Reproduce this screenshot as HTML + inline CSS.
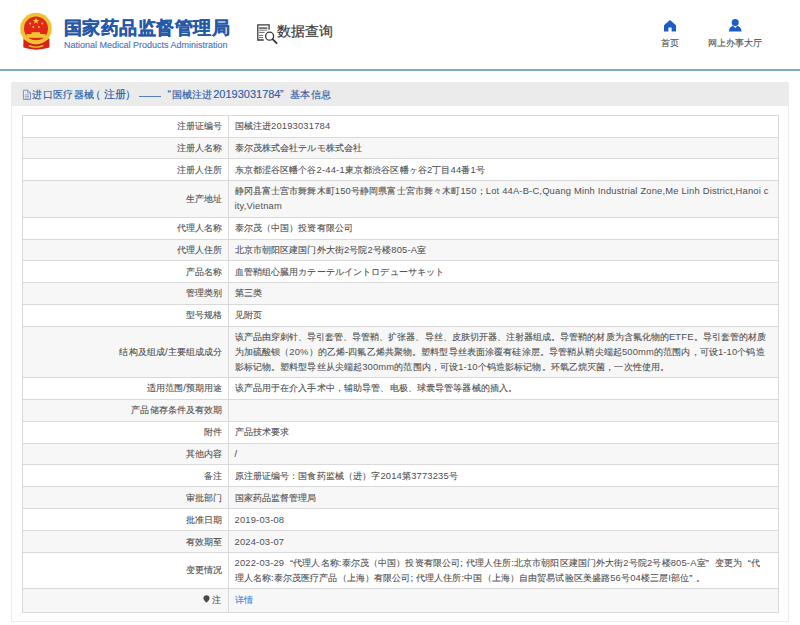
<!DOCTYPE html>
<html><head><meta charset="utf-8">
<style>
*{margin:0;padding:0;box-sizing:border-box}
html,body{width:800px;height:625px;overflow:hidden;background:#fff}
body{font-family:"Liberation Sans",sans-serif;position:relative;color:#333}
.abs{position:absolute}
#title{left:64px;top:15.7px;-webkit-text-stroke:0.3px #2658a8;font-size:18px;font-weight:bold;color:#2658a8;white-space:nowrap;letter-spacing:0.45px;line-height:24px}
#en{left:64px;top:40.3px;font-size:9px;color:#4f78b8;-webkit-text-stroke:0.15px #4f78b8;white-space:nowrap;line-height:11px}
#sq{left:277px;top:22.3px;font-size:14px;color:#3a3a3a;-webkit-text-stroke:0.2px #3a3a3a;white-space:nowrap;line-height:18px}
.nav{font-size:9px;color:#555;-webkit-text-stroke:0.12px #555;white-space:nowrap;line-height:12px}
#bline{left:0;top:69px;width:800px;height:2px;background:#7eaac4}
#panel{left:11px;top:82px;width:778px;height:539.5px;border:1px solid #ececec;border-top:none}
#band{left:11px;top:82px;width:778px;height:24.3px;background:#ebebeb}
.ht{top:87px;font-size:10.5px;color:#2d5ea8;-webkit-text-stroke:0.15px #2d5ea8;white-space:nowrap;line-height:15px}
table{position:absolute;left:22px;top:115px;width:756.5px;border-collapse:collapse;table-layout:fixed;font-size:9.4px;color:#505050;-webkit-text-stroke:0.1px #505050}
td{border:1px solid #d9d9d9;padding:0 6px 1px 6px;letter-spacing:0.12px;line-height:15px;vertical-align:middle}
td.l{width:206px;text-align:right;padding-right:5.5px}
td.r{padding-left:5.5px;white-space:nowrap;overflow:visible}
tr:nth-child(even) td{background:#f7f7f7}
a{color:#3a86d6;text-decoration:none;-webkit-text-stroke:0.1px #3a86d6}
.lt{font-size:9.4px;letter-spacing:0.18px;-webkit-text-stroke:0.02px}
.ql{margin-left:3px}
.qr{margin-right:3px}
</style></head><body>
<!-- emblem -->
<svg class="abs" style="left:10px;top:5px" width="60" height="55" viewBox="0 0 60 55">
  <path d="M13.4 33.5 L13.4 42.6 Q26 46.8 39.4 42.6 L39.4 33.5Z" fill="#d6231a"/>
  <circle cx="26" cy="23.6" r="15.8" fill="#f2c233"/>
  <circle cx="26" cy="23.6" r="12" fill="#e2261c"/>
  <path d="M26 12.7l.8 2.3h2.4l-1.95 1.42.75 2.3-2-1.42-2 1.42.75-2.3-1.95-1.42h2.4z" fill="#f7d445"/>
  <circle cx="20.2" cy="18.5" r="1.05" fill="#f2c233"/><circle cx="32.2" cy="18.5" r="1.05" fill="#f2c233"/>
  <circle cx="23.3" cy="22" r="1" fill="#f2c233"/><circle cx="28.8" cy="22" r="1" fill="#f2c233"/>
  <rect x="21.6" y="27.2" width="8.6" height="2" fill="#f2c233"/>
  <rect x="16.5" y="29" width="19" height="3.8" fill="#f2c233"/>
  <path d="M14.2 31 Q26 39.5 37.8 31 L38.6 34 Q26 43 13.4 34Z" fill="#f2c233"/>
  <path d="M15.6 35.8 Q26 43.5 36.4 35.8 L38.8 40.6 Q26 47.2 13.2 40.6Z" fill="#d6231a"/>
  <path d="M18.8 40.6 Q26 43.6 33.4 40.6" stroke="#f2c233" stroke-width="1.2" fill="none"/>
</svg>
<div id="title" class="abs">国家药品监督管理局</div>
<div id="en" class="abs">National Medical Products Administration</div>
<!-- data query icon -->
<svg class="abs" style="left:254px;top:20px" width="28" height="26" viewBox="0 0 28 26">
  <path d="M9.8 20 H3.8 V4.9 H15.1 V9.8" fill="none" stroke="#3c3c3c" stroke-width="1.3"/>
  <line x1="5.1" y1="8.1" x2="13.4" y2="8.1" stroke="#555" stroke-width="1.5"/>
  <line x1="5.1" y1="10.2" x2="13.4" y2="10.2" stroke="#555" stroke-width=".8"/>
  <line x1="5.1" y1="12.4" x2="10.5" y2="12.4" stroke="#555" stroke-width=".9"/>
  <line x1="5.1" y1="15.4" x2="9.2" y2="15.4" stroke="#555" stroke-width=".9"/>
  <line x1="5.1" y1="17.6" x2="9.2" y2="17.6" stroke="#555" stroke-width=".9"/>
  <circle cx="15.6" cy="16.2" r="4" fill="#fff" stroke="#333" stroke-width="1.3"/>
  <line x1="18.5" y1="19.2" x2="22.6" y2="23.1" stroke="#333" stroke-width="1.8" stroke-linecap="round"/>
</svg>
<div id="sq" class="abs">数据查询</div>
<!-- nav -->
<svg class="abs" style="left:664px;top:20px" width="12" height="12" viewBox="0 0 12 12">
  <path d="M6 0 L12 5.2 L12 11.6 L7.6 11.6 L7.6 7.4 L4.4 7.4 L4.4 11.6 L0 11.6 L0 5.2Z" fill="#1c5cc8"/>
</svg>
<div class="abs nav" style="left:661px;top:37px">首页</div>
<svg class="abs" style="left:728px;top:18px" width="14" height="14" viewBox="0 0 14 14">
  <circle cx="7.2" cy="4.6" r="3.5" fill="#1c5cc8"/>
  <path d="M0.8 13.4 Q1.5 8.6 5 7.8 L7.2 10 L9.4 7.8 Q12.9 8.6 13.6 13.4Z" fill="#1c5cc8"/>
</svg>
<div class="abs nav" style="left:708px;top:37px">网上办事大厅</div>
<div id="bline" class="abs"></div>
<div id="panel" class="abs"></div>
<div id="band" class="abs"></div>
<svg class="abs" style="left:22px;top:89px" width="10" height="12" viewBox="0 0 10 12"><path d="M1.4 1.2h4.4l2.7 2.7v6.5H1.4Z" fill="none" stroke="#6f7db3" stroke-width=".85"/><path d="M5.6 1.2v2.8h2.9" fill="none" stroke="#6f7db3" stroke-width=".7"/><line x1="2.9" y1="5.8" x2="7" y2="5.8" stroke="#7f8cc0" stroke-width=".7"/><line x1="2.9" y1="7.4" x2="7" y2="7.4" stroke="#7f8cc0" stroke-width=".7"/><line x1="2.9" y1="9" x2="7" y2="9" stroke="#7f8cc0" stroke-width=".7"/></svg>
<div class="abs ht" id="h1" style="left:32.2px;font-size:10.4px;letter-spacing:0.35px">进口医疗器械</div>
<div class="abs ht" id="h1b" style="left:90.2px">（</div>
<div class="abs ht" id="h1c" style="left:103.5px;font-size:10.7px">注册</div>
<div class="abs ht" id="h1d" style="left:124.5px">）</div>
<div class="abs" style="left:138.75px;top:95.5px;width:22.5px;height:1.2px;background:#5a80bb"></div>
<div class="abs ht" id="h2" style="left:167.5px">“</div>
<div class="abs ht" id="h3" style="left:171.5px;font-size:10.4px;letter-spacing:0.3px">国械注进</div><div class="abs ht" id="h3b" style="left:213.2px;font-size:11px">20193031784</div>
<div class="abs ht" id="h4" style="left:280px">”</div>
<div class="abs ht" id="h5" style="left:290px;font-size:10.4px;letter-spacing:0.45px">基本信息</div>
<table>
<tr style="height:21.7px"><td class="l">注册证编号</td><td class="r">国械注进<span class="lt">20193031784</span></td></tr>
<tr style="height:21.8px"><td class="l">注册人名称</td><td class="r">泰尔茂株式会社テルモ株式会社</td></tr>
<tr style="height:21.4px"><td class="l">注册人住所</td><td class="r">东京都涩谷区幡个谷<span class="lt">2-44-1</span>東京都渋谷区幡ヶ谷<span class="lt">2</span>丁目<span class="lt">44</span>番<span class="lt">1</span>号</td></tr>
<tr style="height:37px"><td class="l">生产地址</td><td class="r">静冈县富士宫市舞舞木町<span class="lt">150</span>号静岡県富士宮市舞々木町<span class="lt">150</span>；<span class="lt">Lot 44A-B-C,Quang Minh Industrial Zone,Me Linh District,Hanoi c</span><br><span class="lt">ity,Vietnam</span></td></tr>
<tr style="height:22px"><td class="l">代理人名称</td><td class="r">泰尔茂（中国）投资有限公司</td></tr>
<tr style="height:21.4px"><td class="l">代理人住所</td><td class="r">北京市朝阳区建国门外大街<span class="lt">2</span>号院<span class="lt">2</span>号楼<span class="lt">805-A</span>室</td></tr>
<tr style="height:21.8px"><td class="l">产品名称</td><td class="r">血管鞘组心臓用カテーテルイントロデューサキット</td></tr>
<tr style="height:21.8px"><td class="l">管理类别</td><td class="r">第三类</td></tr>
<tr style="height:21.7px"><td class="l">型号规格</td><td class="r">见附页</td></tr>
<tr style="height:51.6px"><td class="l">结构及组成/主要组成成分</td><td class="r"><span style="letter-spacing:0.05px">该产品由穿刺针、导引套管、导管鞘、扩张器、导丝、皮肤切开器、注射器组成。导管鞘的材质为含氟化物的<span class="lt">ETFE</span>。导引套管的材质</span><br>为加硫酸钡（<span class="lt">20%</span>）的乙烯-四氟乙烯共聚物。塑料型导丝表面涂覆有硅涂层。导管鞘从鞘尖端起<span class="lt">500mm</span>的范围内，可设<span class="lt">1-10</span>个钨造<br>影标记物。塑料型导丝从尖端起<span class="lt">300mm</span>的范围内，可设<span class="lt">1-10</span>个钨造影标记物。环氧乙烷灭菌，一次性使用。</td></tr>
<tr style="height:21.6px"><td class="l">适用范围/预期用途</td><td class="r">该产品用于在介入手术中，辅助导管、电极、球囊导管等器械的插入。</td></tr>
<tr style="height:21.9px"><td class="l">产品储存条件及有效期</td><td class="r"></td></tr>
<tr style="height:22px"><td class="l">附件</td><td class="r">产品技术要求</td></tr>
<tr style="height:21.8px"><td class="l">其他内容</td><td class="r">/</td></tr>
<tr style="height:21.9px"><td class="l">备注</td><td class="r">原注册证编号：国食药监械（进）字<span class="lt">2014</span>第<span class="lt">3773235</span>号</td></tr>
<tr style="height:21.9px"><td class="l">审批部门</td><td class="r">国家药品监督管理局</td></tr>
<tr style="height:21.9px"><td class="l">批准日期</td><td class="r"><span class="lt">2019-03-08</span></td></tr>
<tr style="height:21.9px"><td class="l">有效期至</td><td class="r"><span class="lt">2024-03-07</span></td></tr>
<tr style="height:35.6px"><td class="l">变更情况</td><td class="r"><span class="lt">2022-03-29</span> <span class="ql">“</span>代理人名称:泰尔茂（中国）投资有限公司; 代理人住所:北京市朝阳区建国门外大街<span class="lt">2</span>号院<span class="lt">2</span>号楼<span class="lt">805-A</span>室<span class="qr">”</span> 变更为 <span class="ql">“</span>代<br>理人名称:泰尔茂医疗产品（上海）有限公司; 代理人住所:中国（上海）自由贸易试验区美盛路<span class="lt">56</span>号<span class="lt">04</span>楼三层<span class="lt">I</span>部位<span class="qr">”</span>。</td></tr>
<tr style="height:24.4px"><td class="l" style="padding-right:7px"><svg width="7" height="8" viewBox="0 0 7 8" style="vertical-align:0.5px;margin-right:1.5px"><path d="M3.5 .3C5.3 .3 6.6 1.6 6.6 3.3 6.6 5 4.6 6.6 3.5 7.8 2.4 6.6.4 5 .4 3.3.4 1.6 1.7.3 3.5.3Z" fill="#4a4a4a"/></svg>注</td><td class="r"><a>详情</a></td></tr>
</table>
</body></html>
